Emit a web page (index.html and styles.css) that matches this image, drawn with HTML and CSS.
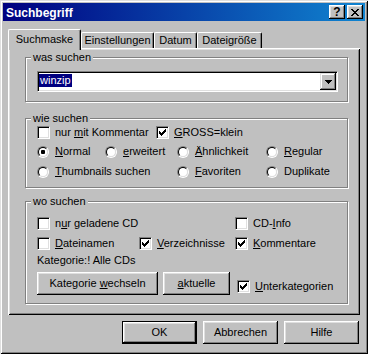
FILE: index.html
```html
<!DOCTYPE html>
<html lang="de">
<head>
<meta charset="utf-8">
<title>Suchbegriff</title>
<link rel="stylesheet" href="styles.css">
</head>
<body>
<div class="window">
  <div class="titlebar">
    <span class="title">Suchbegriff</span>
    <div class="tbtns">
      <span class="tbtn help">?</span>
      <span class="tbtn"><svg width="8" height="7" viewBox="0 0 8 7"><path d="M0 0h2v1H0zM6 0h2v1H6zM1 1h2v1H1zM5 1h2v1H5zM2 2h4v1H2zM3 3h2v1H3zM2 4h4v1H2zM1 5h2v1H1zM5 5h2v1H5zM0 6h2v1H0zM6 6h2v1H6z"/></svg></span>
    </div>
  </div>
  <div class="body">
    <div class="tabs">
      <div class="tab active t1">Suchmaske</div>
      <div class="tab t2">Einstellungen</div>
      <div class="tab t3">Datum</div>
      <div class="tab t4">Dateigröße</div>
    </div>
    <div class="panel">
      <div class="group g1">
        <span class="legend">was suchen</span>
        <div class="combo">
          <span class="sel">winzip</span>
          <span class="drop"><svg width="7" height="4" viewBox="0 0 7 4"><path d="M0 0h7v1H0zM1 1h5v1H1zM2 2h3v1H2zM3 3h1v1H3z"/></svg></span>
        </div>
      </div>
      <div class="group g2">
        <span class="legend">wie suchen</span>
        <div class="row">
          <label class="cb w119"><span class="box"></span><span>nur <u>m</u>it Kommentar</span></label>
          <label class="cb"><span class="box on"><svg width="7" height="7" viewBox="0 0 7 7"><path d="M0 2h1v3H0zM1 3h1v3H1zM2 4h1v3H2zM3 3h1v3H3zM4 2h1v3H4zM5 1h1v3H5zM6 0h1v3H6z"/></svg></span><span><u>G</u>ROSS=klein</span></label>
        </div>
        <div class="row r2">
          <label class="rb w68"><span class="radio"><span class="in on"></span></span><span><u>N</u>ormal</span></label>
          <label class="rb w72"><span class="radio"><span class="in"></span></span><span><u>e</u>rweitert</span></label>
          <label class="rb w89"><span class="radio"><span class="in"></span></span><span><u>Ä</u>hnlichkeit</span></label>
          <label class="rb"><span class="radio"><span class="in"></span></span><span><u>R</u>egular</span></label>
        </div>
        <div class="row r3">
          <label class="rb w140"><span class="radio"><span class="in"></span></span><span><u>T</u>humbnails suchen</span></label>
          <label class="rb w89"><span class="radio"><span class="in"></span></span><span><u>F</u>avoriten</span></label>
          <label class="rb"><span class="radio"><span class="in"></span></span><span>Duplikate</span></label>
        </div>
      </div>
      <div class="group g3">
        <span class="legend">wo suchen</span>
        <div class="row">
          <label class="cb w198"><span class="box"></span><span>n<u>u</u>r geladene CD</span></label>
          <label class="cb"><span class="box"></span><span>CD-<u>I</u>nfo</span></label>
        </div>
        <div class="row rb2">
          <label class="cb w102"><span class="box"></span><span><u>D</u>ateinamen</span></label>
          <label class="cb w96"><span class="box on"><svg width="7" height="7" viewBox="0 0 7 7"><path d="M0 2h1v3H0zM1 3h1v3H1zM2 4h1v3H2zM3 3h1v3H3zM4 2h1v3H4zM5 1h1v3H5zM6 0h1v3H6z"/></svg></span><span><u>V</u>erzeichnisse</span></label>
          <label class="cb"><span class="box on"><svg width="7" height="7" viewBox="0 0 7 7"><path d="M0 2h1v3H0zM1 3h1v3H1zM2 4h1v3H2zM3 3h1v3H3zM4 2h1v3H4zM5 1h1v3H5zM6 0h1v3H6z"/></svg></span><span><u>K</u>ommentare</span></label>
        </div>
        <div class="row rc">Kategorie:! Alle CDs</div>
        <div class="row rd">
          <span class="btn kat"><span>Kategorie <u>w</u>echseln</span></span>
          <span class="btn akt"><span><u>a</u>ktuelle</span></span>
          <label class="cb unter"><span class="box on"><svg width="7" height="7" viewBox="0 0 7 7"><path d="M0 2h1v3H0zM1 3h1v3H1zM2 4h1v3H2zM3 3h1v3H3zM4 2h1v3H4zM5 1h1v3H5zM6 0h1v3H6z"/></svg></span><span><u>U</u>nterkategorien</span></label>
        </div>
      </div>
    </div>
    <div class="footer">
      <span class="btn big default">OK</span>
      <span class="btn big">Abbrechen</span>
      <span class="btn big">Hilfe</span>
    </div>
  </div>
</div>
</body>
</html>
```
FILE: styles.css
```css
html, body {
  margin: 0;
  padding: 0;
}
body {
  width: 368px;
  height: 354px;
  background: #c0c0c0;
  font-family: "Liberation Sans", Arial, sans-serif;
  font-size: 11px;
  line-height: 13px;
  color: #000;
  overflow: hidden;
}
svg {
  display: block;
  shape-rendering: crispEdges;
  fill: #000;
}
u {
  text-decoration: underline;
  text-underline-offset: 1px;
}
.window {
  box-sizing: border-box;
  width: 368px;
  height: 354px;
  padding: 3px;
  background: #c0c0c0;
  box-shadow: inset 1px 1px #dfdfdf, inset -1px -1px #000, inset 2px 2px #fff, inset -2px -2px #808080;
  display: flex;
  flex-direction: column;
}
.titlebar {
  height: 18px;
  flex: none;
  display: flex;
  align-items: flex-start;
  background: linear-gradient(90deg, #000080, #1084d0);
  color: #fff;
}
.title {
  font-weight: bold;
  font-size: 12px;
  line-height: 16px;
  padding: 2px 0 0 3px;
}
.tbtns {
  margin: 2px 2px 0 auto;
  display: flex;
  gap: 2px;
}
.tbtn {
  box-sizing: border-box;
  width: 16px;
  height: 14px;
  background: #c0c0c0;
  box-shadow: inset -1px -1px #000, inset 1px 1px #fff, inset -2px -2px #808080, inset 2px 2px #dfdfdf;
  display: flex;
  align-items: center;
  justify-content: center;
  color: #000;
}
.tbtn.help {
  font-weight: bold;
  font-size: 12px;
  line-height: 12px;
}
.body {
  padding: 8px 5px 0 5px;
  display: flex;
  flex-direction: column;
}
.tabs {
  display: flex;
  align-items: flex-start;
  height: 21px;
  margin-bottom: -2px;
}
.tab {
  box-sizing: border-box;
  height: 16px;
  margin-top: 3px;
  border-top: 1px solid #fff;
  border-left: 1px solid #fff;
  border-right: 1px solid #000;
  border-radius: 2px 2px 0 0;
  box-shadow: inset -1px 0 #808080;
  padding-top: 1px;
  display: flex;
  justify-content: center;
  white-space: nowrap;
}
.tab.active {
  position: relative;
  z-index: 1;
  height: 21px;
  margin-top: 0;
  padding-top: 3px;
  background: #c0c0c0;
}
.t1 { width: 73px; }
.t2 { width: 73px; }
.t3 { width: 43px; }
.t4 { width: 65px; }
.panel {
  box-sizing: border-box;
  height: 267px;
  padding: 9px 12px 0 17px;
  box-shadow: inset 1px 1px #fff, inset -1px -1px #000, inset 2px 2px #dfdfdf, inset -2px -2px #808080;
}
.group {
  position: relative;
  border: 1px solid #808080;
  box-shadow: 1px 1px #fff, inset 1px 1px #fff;
}
.legend {
  position: absolute;
  top: -7px;
  left: 5px;
  padding: 0 2px;
  background: #c0c0c0;
  line-height: 13px;
}
.g1 {
  padding: 13px 9px 9px 11px;
}
.g2 {
  margin-top: 16px;
  padding: 7px 9px 9px 11px;
}
.g3 {
  margin-top: 13px;
  padding: 15px 9px 8px 11px;
}
.combo {
  box-sizing: border-box;
  height: 21px;
  padding: 1px;
  border: 1px solid;
  border-color: #808080 #fff #fff #808080;
  box-shadow: inset 1px 1px #000, inset -1px -1px #dfdfdf;
  background: #fff;
  display: flex;
}
.sel {
  align-self: flex-start;
  margin-top: 1px;
  padding: 0 1px;
  background: #000080;
  color: #fff;
}
.drop {
  margin-left: auto;
  box-sizing: border-box;
  width: 16px;
  height: 17px;
  background: #c0c0c0;
  box-shadow: inset -1px -1px #000, inset 1px 1px #dfdfdf, inset -2px -2px #808080, inset 2px 2px #fff;
  display: flex;
  align-items: center;
  justify-content: center;
}
.row {
  display: flex;
  align-items: center;
  height: 13px;
  white-space: nowrap;
}
.g2 .r2 { margin-top: 6px; }
.g2 .r3 { margin-top: 7px; }
.g3 .rb2 { margin-top: 7px; }
.g3 .rc { margin-top: 4px; }
.g3 .rd {
  margin-top: 5px;
  height: 23px;
  align-items: flex-start;
}
.cb, .rb {
  display: flex;
  align-items: center;
  flex: none;
}
.w68 { width: 68px; }
.w72 { width: 72px; }
.w89 { width: 89px; }
.w96 { width: 96px; }
.w102 { width: 102px; }
.w119 { width: 119px; }
.w140 { width: 140px; }
.w198 { width: 198px; }
.box {
  box-sizing: border-box;
  width: 13px;
  height: 13px;
  margin-right: 5px;
  border: 1px solid;
  border-color: #808080 #fff #fff #808080;
  box-shadow: inset 1px 1px #000, inset -1px -1px #dfdfdf;
  background: #fff;
  display: flex;
  align-items: center;
  justify-content: center;
  flex: none;
}
.radio {
  box-sizing: border-box;
  width: 12px;
  height: 12px;
  margin-right: 6px;
  border-radius: 50%;
  border: 1px solid;
  border-color: #808080 #fff #fff #808080;
  flex: none;
  display: flex;
}
.radio .in {
  flex: 1;
  border-radius: 50%;
  border: 1px solid;
  border-color: #000 #dfdfdf #dfdfdf #000;
  background: #fff;
}
.radio .in.on {
  background: radial-gradient(circle, #000 0 2px, #fff 2.5px);
}
.btn {
  box-sizing: border-box;
  height: 23px;
  background: #c0c0c0;
  box-shadow: inset -1px -1px #000, inset 1px 1px #fff, inset -2px -2px #808080, inset 2px 2px #dfdfdf;
  display: flex;
  align-items: center;
  justify-content: center;
  white-space: nowrap;
  flex: none;
}
.kat { width: 121px; }
.akt { width: 67px; margin-left: 5px; }
.unter { margin: 8px 0 0 7px; }
.footer {
  margin-top: 6px;
  padding-right: 1px;
  display: flex;
  justify-content: flex-end;
  gap: 6px;
}
.big { width: 75px; }
.btn.default {
  border: 1px solid #000;
}
```
